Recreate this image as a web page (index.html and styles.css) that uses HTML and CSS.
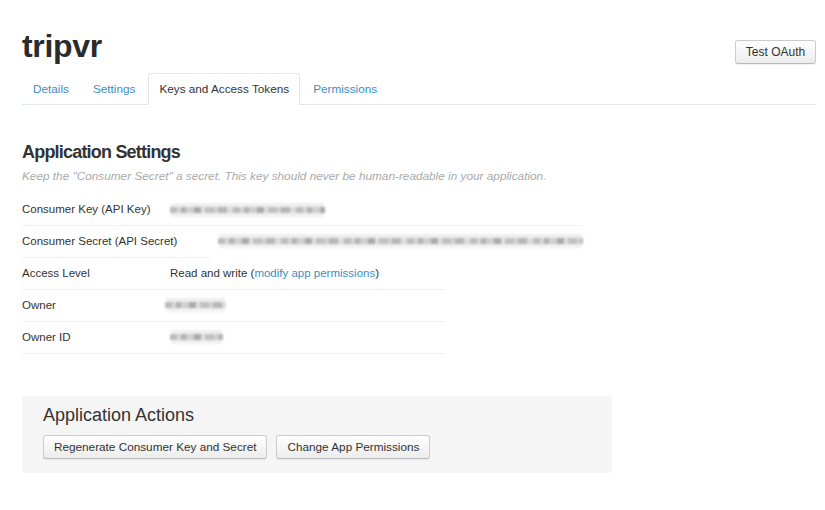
FILE: index.html
```html
<!DOCTYPE html>
<html lang="en">
<head>
<meta charset="utf-8">
<title>tripvr - Keys and Access Tokens</title>
<link rel="stylesheet" href="styles.css">
</head>
<body>
<div class="page">
  <header class="header">
    <h1 class="logo">tripvr</h1>
    <button class="btn btn-top">Test OAuth</button>
  </header>
  <nav class="tabs">
    <a class="tab" href="#">Details</a>
    <a class="tab" href="#">Settings</a>
    <a class="tab active" href="#">Keys and Access Tokens</a>
    <a class="tab" href="#">Permissions</a>
  </nav>

  <section class="settings">
    <h2 class="section-title">Application Settings</h2>
    <p class="hint">Keep the "Consumer Secret" a secret. This key should never be human-readable in your application.</p>
    <div class="row row-key">
      <span class="label">Consumer Key (API Key)</span>
      <span class="value"><span class="blur blur-key"></span></span>
    </div>
    <div class="row row-secret">
      <span class="label label-wide">Consumer Secret (API Secret)</span>
      <span class="value"><span class="blur blur-secret"></span></span>
    </div>
    <div class="row row-std">
      <span class="label">Access Level</span>
      <span class="value">Read and write (<a class="link" href="#">modify app permissions</a>)</span>
    </div>
    <div class="row row-std">
      <span class="label">Owner</span>
      <span class="value"><span class="blur blur-owner"></span></span>
    </div>
    <div class="row row-std">
      <span class="label">Owner ID</span>
      <span class="value"><span class="blur blur-ownerid"></span></span>
    </div>
  </section>

  <section class="actions">
    <h3 class="actions-title">Application Actions</h3>
    <div class="actions-buttons">
      <button class="btn">Regenerate Consumer Key and Secret</button>
      <button class="btn">Change App Permissions</button>
    </div>
  </section>
</div>
</body>
</html>
```

FILE: styles.css
```css
* { box-sizing: border-box; }
html, body { margin: 0; padding: 0; background: #fff; }
body {
  font-family: "Liberation Sans", Arial, Helvetica, sans-serif;
  color: #333;
  font-size: 11.5px;
}
.page { padding: 26px 9px 0 22px; }

.header {
  display: flex;
  justify-content: space-between;
  align-items: flex-start;
}
.logo {
  margin: 0;
  font-size: 32px;
  line-height: 40px;
  font-weight: bold;
  color: #292b2c;
  letter-spacing: -0.3px;
}
.btn {
  font-family: "Liberation Sans", Arial, Helvetica, sans-serif;
  font-size: 11.75px;
  color: #333;
  height: 24px;
  padding: 0 10px;
  border: 1px solid #ccc;
  border-bottom-color: #bbb;
  border-radius: 3px;
  background: linear-gradient(#fff, #ececec);
  box-shadow: 0 1px 1px rgba(0,0,0,0.06);
  line-height: 22px;
}
.btn-top { margin-top: 14px; width: 81px; padding: 0; font-size: 12px; }

.tabs {
  margin-top: 7px;
  display: flex;
  border-bottom: 1px solid #e1e8ed;
}
.tab {
  display: block;
  padding: 6px 10px;
  line-height: 18px;
  border: 1px solid transparent;
  border-bottom: 0;
  margin-right: 2px;
  color: #3a8fc2;
  text-decoration: none;
  font-size: 11.75px;
}
.tab.active {
  color: #333;
  background: #fff;
  border-color: #e1e8ed;
  border-radius: 3px 3px 0 0;
  margin-bottom: -1px;
  padding-bottom: 7px;
}

.settings { margin-top: 36px; }
.section-title {
  margin: 0;
  font-size: 18px;
  line-height: 22px;
  font-weight: bold;
  letter-spacing: -0.8px;
  color: #333;
}
.hint {
  margin: 5px 0 10px;
  font-style: italic;
  color: #aaa;
  font-size: 11.8px;
  line-height: 16px;
}
.row {
  display: flex;
  align-items: center;
  height: 32px;
  padding-bottom: 2px;
  border-bottom: 1px solid #eef0f2;
}
.row-key { width: 560px; }
.row-secret { width: 188px; overflow: visible; white-space: nowrap; }
.row-std { width: 423px; }
.label { flex: none; width: 148px; color: #333; }
.label-wide { width: 196px; }
.value { flex: none; color: #333; white-space: nowrap; }
.link { color: #3a8fc2; text-decoration: none; }

.blur {
  display: block;
  height: 6px;
  filter: blur(1.1px);
  box-shadow: 0 -5px 0 -1px #efefef, 0 5px 0 -1px #f1f1f1;
  background: repeating-linear-gradient(90deg,
    #bdbdbd 0 7px, #d6d6d6 7px 11px, #b2b2b2 11px 16px,
    #cfcfcf 16px 24px, #a9a9a9 24px 31px, #e0e0e0 31px 35px,
    #c0c0c0 35px 44px, #d2d2d2 44px 48px, #b6b6b6 48px 57px,
    #dcdcdc 57px 63px);
}
.blur-key { width: 155px; margin-top: 2px; }
.blur-secret { width: 365px; }
.blur-owner { width: 61px; margin-left: -5px; }
.blur-ownerid { width: 53px; }

.actions {
  margin-top: 42px;
  width: 590px;
  background: #f5f5f5;
  border-radius: 4px;
  padding: 8px 21px 14px;
}
.actions-title {
  margin: 0 0 9px;
  font-size: 18px;
  line-height: 22px;
  font-weight: normal;
  color: #333;
}
.actions-buttons { display: flex; gap: 9px; }
```
